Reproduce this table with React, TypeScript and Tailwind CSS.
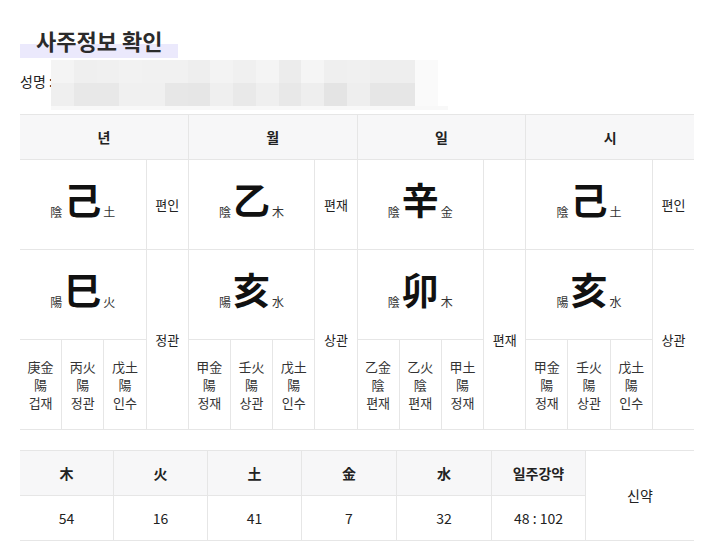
import React from 'react';

type Pillar = {
  label: string;
  stem: string;
  stemYY: string;
  stemEl: string;
  stemTg: string;
  branch: string;
  branchYY: string;
  branchEl: string;
  branchTg: string;
  hidden: string[][];
};

const pillars: Pillar[] = [
  {
    label: '년', stem: '己', stemYY: '陰', stemEl: '土', stemTg: '편인',
    branch: '巳', branchYY: '陽', branchEl: '火', branchTg: '정관',
    hidden: [['庚金', '陽', '겁재'], ['丙火', '陽', '정관'], ['戊土', '陽', '인수']],
  },
  {
    label: '월', stem: '乙', stemYY: '陰', stemEl: '木', stemTg: '편재',
    branch: '亥', branchYY: '陽', branchEl: '水', branchTg: '상관',
    hidden: [['甲金', '陽', '정재'], ['壬火', '陽', '상관'], ['戊土', '陽', '인수']],
  },
  {
    label: '일', stem: '辛', stemYY: '陰', stemEl: '金', stemTg: '',
    branch: '卯', branchYY: '陰', branchEl: '木', branchTg: '편재',
    hidden: [['乙金', '陰', '편재'], ['乙火', '陰', '편재'], ['甲土', '陽', '정재']],
  },
  {
    label: '시', stem: '己', stemYY: '陰', stemEl: '土', stemTg: '편인',
    branch: '亥', branchYY: '陽', branchEl: '水', branchTg: '상관',
    hidden: [['甲金', '陽', '정재'], ['壬火', '陽', '상관'], ['戊土', '陽', '인수']],
  },
];

const mosaicTop = [
  'bg-[#f4f4f4]', 'bg-[#efefef]', 'bg-[#f0f0f0]', 'bg-[#f2f2f2]', 'bg-[#f1f1f1]', 'bg-[#f1f1f1]',
  'bg-[#eeeeee]', 'bg-[#f3f3f3]', 'bg-[#f0f0f0]', 'bg-[#f4f4f4]', 'bg-[#ececec]', 'bg-[#f5f5f5]',
  'bg-[#efefef]', 'bg-[#f0f0f0]', 'bg-[#eeeeee]', 'bg-[#eeeeee]',
];
const mosaicBottom = [
  'bg-[#efefef]', 'bg-[#e8e8e8]', 'bg-[#e8e8e8]', 'bg-[#f0f0f0]', 'bg-[#f0f0f0]', 'bg-[#e7e7e7]',
  'bg-[#e6e6e6]', 'bg-[#efefef]', 'bg-[#e9e9e9]', 'bg-[#efefef]', 'bg-[#e8e8e8]', 'bg-[#eeeeee]',
  'bg-[#e4e4e4]', 'bg-[#eeeeee]', 'bg-[#e6e6e6]', 'bg-[#e6e6e6]',
];

function CharBlock({ yy, ch, el }: { yy: string; ch: string; el: string }) {
  return (
    <div className="flex items-end justify-center pb-[11px]">
      <span className="text-[12px] leading-none text-[#333]">{yy}</span>
      <span className="text-[37px] font-bold leading-none text-[#111] mx-[2px]">{ch}</span>
      <span className="text-[12px] leading-none text-[#333]">{el}</span>
    </div>
  );
}

export default function App() {
  const cell = 'bg-white flex items-center justify-center';
  const head = 'bg-[#f7f7f8] flex items-center justify-center text-[14px] text-[#222]';

  return (
    <div
      className="min-h-[559px] w-[720px] bg-white pl-5 pr-[26px] pt-[27px] text-[#222]"
      style={{ fontFamily: '"Noto Sans CJK KR", "Noto Sans", sans-serif' }}
    >
      <div>
        <span className="relative inline-block px-4 pb-1 text-[22px] font-bold leading-[26px] text-[#2b2b2b]">
          <span className="absolute left-0 right-0 bottom-[-1px] h-[14px] bg-[#ebe9fc]" />
          <span className="relative">사주정보 확인</span>
        </span>
      </div>

      <div className="relative mt-[2px] h-[44px] flex items-center text-[14px] text-[#222]">
        <span>성명 :</span>
        <div className="absolute left-[31px] top-[1px] flex flex-col">
          <div className="flex">
            {mosaicTop.map((c, i) => (
              <div key={i} className={`h-[23px] w-[22.75px] ${c}`} />
            ))}
            <div className="h-[23px] w-[23px] bg-[#fafafa]" />
          </div>
          <div className="flex">
            {mosaicBottom.map((c, i) => (
              <div key={i} className={`h-[23px] w-[22.75px] ${c}`} />
            ))}
            <div className="h-[23px] w-[23px] bg-[#fafafa]" />
          </div>
          <div className="h-[4px] w-[397px] bg-[#f8f8f8]" />
        </div>
      </div>

      <div className="mt-[11px] grid grid-cols-16 grid-rows-[44px_89px_89px_89px] gap-px bg-[#e6e6e6] border-y border-[#e6e6e6]">
        {pillars.map((p) => (
          <div key={'h' + p.label} className={`col-span-4 ${head} font-semibold`}>{p.label}</div>
        ))}
        {pillars.flatMap((p, i) => [
          <div key={'s' + i} className={`col-span-3 ${cell}`}>
            <CharBlock yy={p.stemYY} ch={p.stem} el={p.stemEl} />
          </div>,
          <div key={'st' + i} className={`${cell} text-[13px]`}>{p.stemTg}</div>,
        ])}
        {pillars.flatMap((p, i) => [
          <div key={'b' + i} className={`col-span-3 ${cell}`}>
            <CharBlock yy={p.branchYY} ch={p.branch} el={p.branchEl} />
          </div>,
          <div key={'bt' + i} className={`row-span-2 ${cell} text-[13px]`}>{p.branchTg}</div>,
        ])}
        {pillars.flatMap((p, i) =>
          p.hidden.map((h, j) => (
            <div key={'hd' + i + '-' + j} className={`${cell} flex-col text-[13px] leading-[18px] text-[#333]`}>
              <span>{h[0]}</span>
              <span>{h[1]}</span>
              <span>{h[2]}</span>
            </div>
          ))
        )}
      </div>

      <div className="mt-[20px] grid grid-cols-[93px_93px_93px_94px_94px_93px_1fr] grid-rows-[44px_44px] gap-px bg-[#e6e6e6] border-y border-[#e6e6e6] text-[14px]">
        {['木', '火', '土', '金', '水'].map((h) => (
          <div key={h} className={`${head} font-bold`}>{h}</div>
        ))}
        <div className={`${head} font-semibold`}>일주강약</div>
        <div className={`row-span-2 ${cell}`}>신약</div>
        {['54', '16', '41', '7', '32', '48 : 102'].map((v, i) => (
          <div key={'v' + i} className={cell}>{v}</div>
        ))}
      </div>
    </div>
  );
}
